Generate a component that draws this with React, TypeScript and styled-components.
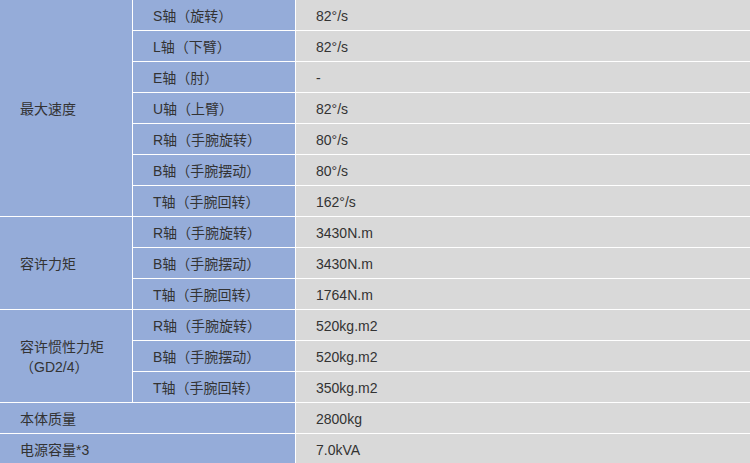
import * as React from 'react';
import styled, { createGlobalStyle } from 'styled-components';

const GlobalStyle = createGlobalStyle`
  html, body {
    margin: 0;
    padding: 0;
    background: #fff;
  }
`;

const SpecTable = styled.table`
  width: 750px;
  border-collapse: separate;
  border-spacing: 0;
  table-layout: fixed;
  font-family: 'Liberation Sans', Arial, 'Noto Sans CJK SC', sans-serif;
  font-size: 14px;
  line-height: 20px;
  color: #333;
`;

const Cell = styled.td<{ $kind: 'label' | 'value' }>`
  height: 29px;
  padding: 1px 0 0 20px;
  box-sizing: content-box;
  vertical-align: middle;
  background-color: ${props => (props.$kind === 'label' ? '#95acd9' : '#d9d9d9')};
  border-right: ${props => (props.$kind === 'label' ? '1px solid #fff' : 'none')};
  border-bottom: 1px solid #fff;
  white-space: nowrap;
`;

type Row = { sub: string; value: string };
type Group = { title: React.ReactNode; rows: Row[] };

const groups: Group[] = [
  {
    title: '最大速度',
    rows: [
      { sub: 'S轴（旋转）', value: '82°/s' },
      { sub: 'L轴（下臂）', value: '82°/s' },
      { sub: 'E轴（肘）', value: '-' },
      { sub: 'U轴（上臂）', value: '82°/s' },
      { sub: 'R轴（手腕旋转）', value: '80°/s' },
      { sub: 'B轴（手腕摆动）', value: '80°/s' },
      { sub: 'T轴（手腕回转）', value: '162°/s' },
    ],
  },
  {
    title: '容许力矩',
    rows: [
      { sub: 'R轴（手腕旋转）', value: '3430N.m' },
      { sub: 'B轴（手腕摆动）', value: '3430N.m' },
      { sub: 'T轴（手腕回转）', value: '1764N.m' },
    ],
  },
  {
    title: (
      <>
        容许惯性力矩
        <br />
        （GD2/4）
      </>
    ),
    rows: [
      { sub: 'R轴（手腕旋转）', value: '520kg.m2' },
      { sub: 'B轴（手腕摆动）', value: '520kg.m2' },
      { sub: 'T轴（手腕回转）', value: '350kg.m2' },
    ],
  },
];

const singles = [
  { title: '本体质量', value: '2800kg' },
  { title: '电源容量*3', value: '7.0kVA' },
];

export default function App() {
  return (
    <>
      <GlobalStyle />
      <SpecTable>
        <colgroup>
          <col style={{ width: 133 }} />
          <col style={{ width: 163 }} />
          <col />
        </colgroup>
        <tbody>
          {groups.map((g, gi) =>
            g.rows.map((r, ri) => (
              <tr key={`${gi}-${ri}`}>
                {ri === 0 && (
                  <Cell $kind="label" rowSpan={g.rows.length}>
                    {g.title}
                  </Cell>
                )}
                <Cell $kind="label">{r.sub}</Cell>
                <Cell $kind="value">{r.value}</Cell>
              </tr>
            ))
          )}
          {singles.map(s => (
            <tr key={s.title}>
              <Cell $kind="label" colSpan={2}>
                {s.title}
              </Cell>
              <Cell $kind="value">{s.value}</Cell>
            </tr>
          ))}
        </tbody>
      </SpecTable>
    </>
  );
}
